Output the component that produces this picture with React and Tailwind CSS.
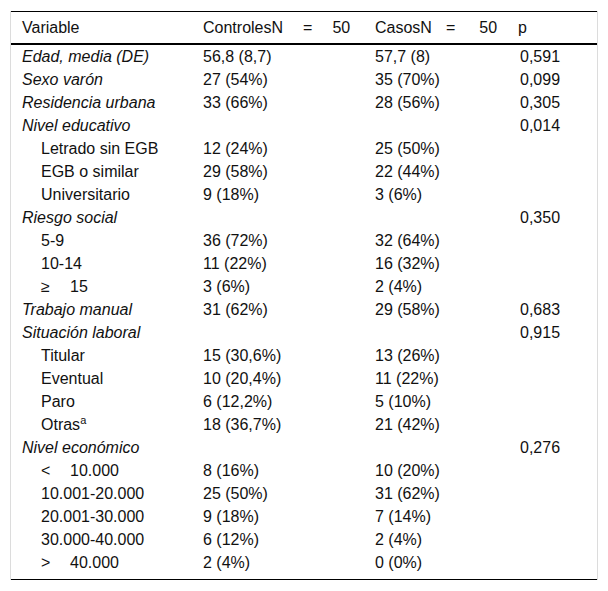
import React from 'react';

const rows = [
  { label: 'Edad, media (DE)', main: true, a: '56,8 (8,7)', b: '57,7 (8)', p: '0,591' },
  { label: 'Sexo varón', main: true, a: '27 (54%)', b: '35 (70%)', p: '0,099' },
  { label: 'Residencia urbana', main: true, a: '33 (66%)', b: '28 (56%)', p: '0,305' },
  { label: 'Nivel educativo', main: true, a: '', b: '', p: '0,014' },
  { label: 'Letrado sin EGB', a: '12 (24%)', b: '25 (50%)', p: '' },
  { label: 'EGB o similar', a: '29 (58%)', b: '22 (44%)', p: '' },
  { label: 'Universitario', a: '9 (18%)', b: '3 (6%)', p: '' },
  { label: 'Riesgo social', main: true, a: '', b: '', p: '0,350' },
  { label: '5-9', a: '36 (72%)', b: '32 (64%)', p: '' },
  { label: '10-14', a: '11 (22%)', b: '16 (32%)', p: '' },
  { label: ['≥', '15'], a: '3 (6%)', b: '2 (4%)', p: '' },
  { label: 'Trabajo manual', main: true, a: '31 (62%)', b: '29 (58%)', p: '0,683' },
  { label: 'Situación laboral', main: true, a: '', b: '', p: '0,915' },
  { label: 'Titular', a: '15 (30,6%)', b: '13 (26%)', p: '' },
  { label: 'Eventual', a: '10 (20,4%)', b: '11 (22%)', p: '' },
  { label: 'Paro', a: '6 (12,2%)', b: '5 (10%)', p: '' },
  { label: 'Otras', sup: 'a', a: '18 (36,7%)', b: '21 (42%)', p: '' },
  { label: 'Nivel económico', main: true, a: '', b: '', p: '0,276' },
  { label: ['<', '10.000'], a: '8 (16%)', b: '10 (20%)', p: '' },
  { label: '10.001-20.000', a: '25 (50%)', b: '31 (62%)', p: '' },
  { label: '20.001-30.000', a: '9 (18%)', b: '7 (14%)', p: '' },
  { label: '30.000-40.000', a: '6 (12%)', b: '2 (4%)', p: '' },
  { label: ['>', '40.000'], a: '2 (4%)', b: '0 (0%)', p: '' },
];

const cols = 'grid grid-cols-[181px_172px_143px_90px]';

const Label = ({ row }) => {
  if (Array.isArray(row.label)) {
    return (
      <span>
        <span className="inline-block w-[29px]">{row.label[0]}</span>
        {row.label[1]}
      </span>
    );
  }
  return (
    <span>
      {row.label}
      {row.sup && <sup className="text-[11px]">{row.sup}</sup>}
    </span>
  );
};

export default function App() {
  return (
    <div className="bg-white pt-[11px] px-[10px] pb-[11px] font-['Liberation_Sans',Arial,sans-serif] text-[16px] text-[#111]">
      <div className="border-x border-[#dcdcdc]">
        <div className="border-t border-b border-black pb-[5px]">
          {/* Header */}
          <div className={`${cols} h-[33px] items-center border-b-2 border-black`}>
            <div className="pl-[11px]">Variable</div>
            <div className="pl-[11px]">
              ControlesN<span className="inline-block w-[20px]" />=<span className="inline-block w-[20px]" />50
            </div>
            <div className="pl-[11px]">
              CasosN<span className="inline-block w-[14px]" />=<span className="inline-block w-[24px]" />50
            </div>
            <div className="pl-[11px]">p</div>
          </div>

          {rows.map((row, i) => (
            <div key={i} className={`${cols} h-[23px] items-center leading-none`}>
              <div className={row.main ? 'pl-[11px] italic' : 'pl-[30px]'}>
                <Label row={row} />
              </div>
              <div className="pl-[11px]">{row.a}</div>
              <div className="pl-[11px]">{row.b}</div>
              <div className="pl-[13px]">{row.p}</div>
            </div>
          ))}
        </div>
      </div>
    </div>
  );
}
